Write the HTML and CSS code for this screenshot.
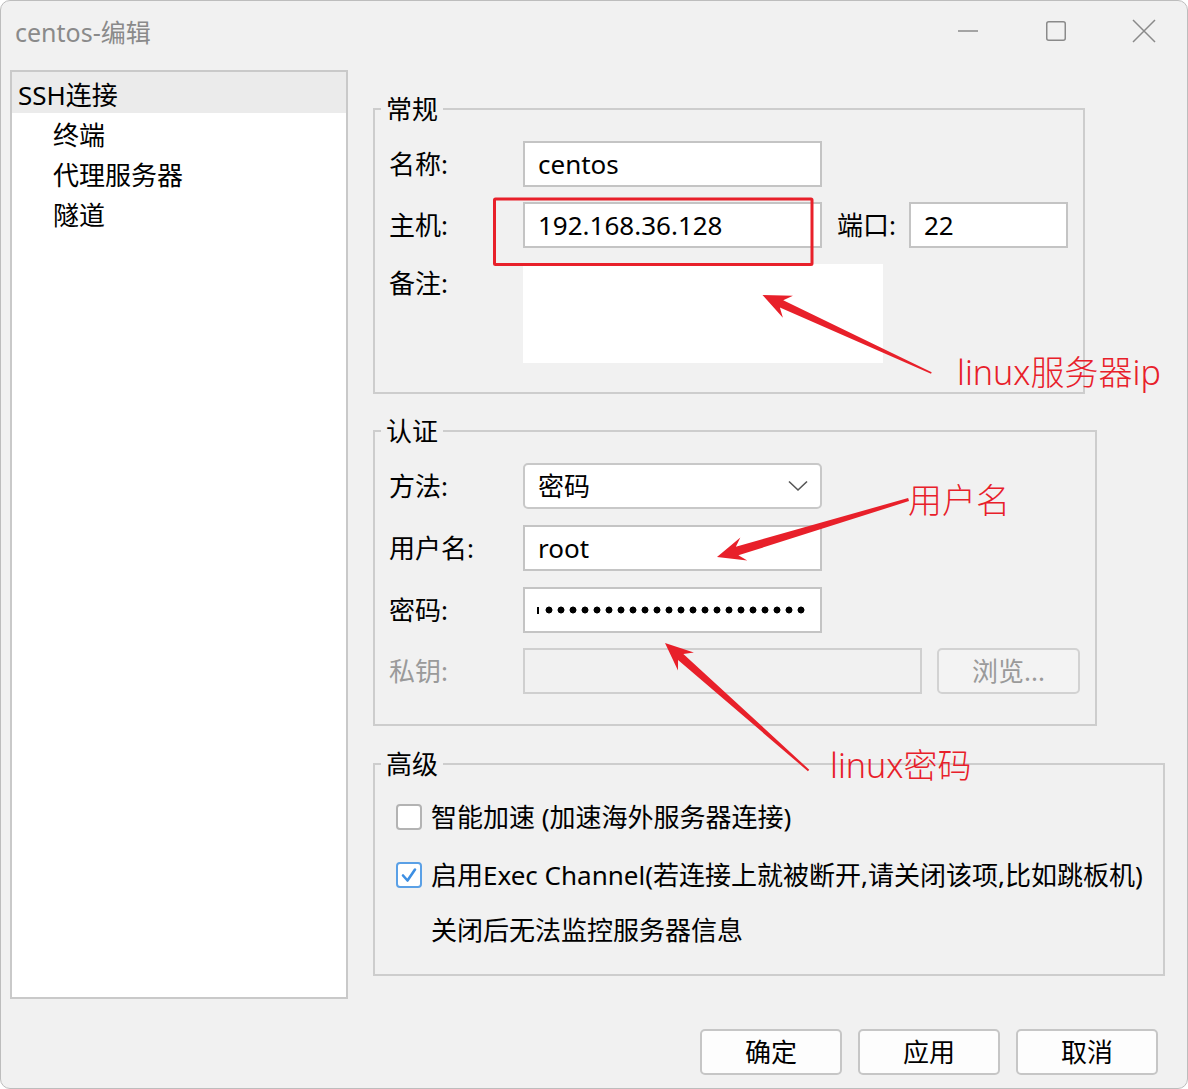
FILE: index.html
```html
<!DOCTYPE html>
<html lang="zh-CN">
<head>
<meta charset="utf-8">
<title>centos-编辑</title>
<link rel="stylesheet" href="styles.css">
</head>
<body>
<div class="window">
  <div class="titlebar">
    <span class="title">centos-编辑</span>
    <div class="controls">
      <span class="ctl"><svg width="24" height="24" viewBox="0 0 24 24"><line x1="2" y1="12" x2="22" y2="12" stroke="#8a8a8a" stroke-width="1.5"/></svg></span>
      <span class="ctl"><svg width="24" height="24" viewBox="0 0 24 24"><rect x="2.75" y="2.75" width="18.5" height="18.5" rx="2" fill="none" stroke="#8a8a8a" stroke-width="1.5"/></svg></span>
      <span class="ctl"><svg width="24" height="24" viewBox="0 0 24 24"><path d="M1 1 L23 23 M23 1 L1 23" stroke="#8a8a8a" stroke-width="1.5" fill="none"/></svg></span>
    </div>
  </div>

  <div class="main">
    <div class="tree">
      <div class="node selected">SSH连接</div>
      <div class="children">
        <div class="node child">终端</div>
        <div class="node child">代理服务器</div>
        <div class="node child">隧道</div>
      </div>
    </div>

    <div class="form">
      <fieldset class="group general">
        <legend>常规</legend>
        <div class="body">
          <div class="row">
            <span class="label">名称:</span>
            <div class="field w-main">centos</div>
          </div>
          <div class="row gap15">
            <span class="label">主机:</span>
            <div class="field w-main">192.168.36.128</div>
            <span class="label port-label">端口:</span>
            <div class="field w-port">22</div>
          </div>
          <div class="row top gap16">
            <span class="label note-label">备注:</span>
            <div class="memo"></div>
          </div>
        </div>
      </fieldset>

      <fieldset class="group auth">
        <legend>认证</legend>
        <div class="body">
          <div class="row">
            <span class="label">方法:</span>
            <div class="field w-main select">密码
              <svg class="chev" width="20" height="12" viewBox="0 0 20 12"><polyline points="1,1.5 10,10 19,1.5" fill="none" stroke="#555" stroke-width="1.6"/></svg>
            </div>
          </div>
          <div class="row gap16">
            <span class="label">用户名:</span>
            <div class="field w-main">root</div>
          </div>
          <div class="row gap16">
            <span class="label">密码:</span>
            <div class="field w-main pwd"><span class="caret"></span><span class="dots"></span></div>
          </div>
          <div class="row gap15">
            <span class="label disabled">私钥:</span>
            <div class="field w-key off"></div>
            <div class="browse">浏览...</div>
          </div>
        </div>
      </fieldset>

      <fieldset class="group adv">
        <legend>高级</legend>
        <div class="body">
          <div class="row">
            <span class="check"></span>
            <span class="ctext">智能加速 (加速海外服务器连接)</span>
          </div>
          <div class="row gap12">
            <span class="check on"><svg width="22" height="22" viewBox="0 0 22 22"><polyline points="5,11.5 9.5,16.5 17,5.5" fill="none" stroke="#3d8fe3" stroke-width="2.6" stroke-linecap="round" stroke-linejoin="round"/></svg></span>
            <span class="ctext">启用Exec Channel(若连接上就被断开,请关闭该项,比如跳板机)</span>
          </div>
          <div class="row gap9">
            <span class="ctext hint">关闭后无法监控服务器信息</span>
          </div>
        </div>
      </fieldset>
    </div>
  </div>

  <div class="footer">
    <button class="btn">确定</button>
    <button class="btn">应用</button>
    <button class="btn">取消</button>
  </div>

  <svg class="marks" width="1188" height="1089" viewBox="0 0 1188 1089">
    <rect x="494.5" y="199" width="317.5" height="65.5" rx="1" fill="none" stroke="#e8202a" stroke-width="3"/>
    <g fill="#e8202a">
      <path transform="translate(762.5,295) rotate(204.8)" d="M0,0 L-28,-12 L-21,-4 L-186,-0.8 L-186,0.8 L-21,4 L-28,12 Z"/>
      <path transform="translate(717,557) rotate(163.3)" d="M0,0 L-28,-12 L-21,-4.5 L-200,-1.6 L-200,1.6 L-21,4.5 L-28,12 Z"/>
      <path transform="translate(665,643) rotate(-138.4)" d="M0,0 L-28,-12 L-21,-4 L-192,-1 L-192,1 L-21,4 L-28,12 Z"/>
    </g>
  </svg>
  <span class="note n-ip">linux服务器ip</span>
  <span class="note n-user">用户名</span>
  <span class="note n-pwd">linux密码</span>
</div>
</body>
</html>
```

FILE: styles.css
```css
* { box-sizing: border-box; }
html, body { margin: 0; padding: 0; }
body {
  background: #ffffff;
  font-family: "Noto Sans", "Noto Sans CJK SC", sans-serif;
  font-size: 26px;
  color: #000;
}
.window {
  position: relative;
  width: 1188px;
  height: 1089px;
  background: #f1f1f1;
  border: 1px solid #bdbdbd;
  border-radius: 10px;
  overflow: hidden;
}
.titlebar {
  display: flex;
  align-items: flex-start;
  height: 69px;
}
.title {
  margin-left: 14px;
  margin-top: 16px;
  line-height: 30px;
  font-size: 25px;
  color: #8a8a8a;
}
.controls {
  margin-left: auto;
  display: flex;
  margin-right: -1px;
}
.ctl {
  width: 88px;
  height: 60px;
  display: flex;
  align-items: center;
  justify-content: center;
}

.main {
  display: flex;
  align-items: flex-start;
}
.tree {
  margin-left: 9px;
  width: 338px;
  height: 929px;
  background: #fff;
  border: 2px solid #c9c9c9;
}
.node {
  line-height: 40px;
  height: 40px;
  padding-left: 6px;
  white-space: nowrap;
}
.node.selected {
  background: #ebebeb;
  height: 41px;
  line-height: 36px;
  padding-top: 5px;
}
.children { padding-top: 2px; }
.node.child { padding-left: 41px; }

.form {
  margin-left: 25px;
  padding-top: 24px;
  display: flex;
  flex-direction: column;
}
.group {
  margin: 0;
  padding: 0;
  border: 2px solid #cdcdcd;
  min-width: 0;
}
.group legend {
  margin-left: 6px;
  padding: 0 5px;
  line-height: 30px;
  font-size: 26px;
}
.general { width: 712px; }
.auth { width: 724px; margin-top: 22px; }
.adv { width: 792px; margin-top: 23px; }

.general .body { padding: 17px 0 29px 14px; }
.auth .body { padding: 17px 0 30px 14px; }
.adv .body { padding: 15px 0 21px 21px; }

.row {
  display: flex;
  align-items: center;
  height: 46px;
}
.row.top { align-items: flex-start; height: auto; }
.gap9 { margin-top: 9px; }
.gap12 { margin-top: 12px; }
.gap15 { margin-top: 15px; }
.gap16 { margin-top: 16px; }

.label {
  width: 134px;
  flex: none;
  line-height: 30px;
  white-space: nowrap;
}
.label.disabled { color: #9a9a9a; }
.note-label { line-height: 38px; }
.port-label { width: 72px; margin-left: 15px; }

.field {
  height: 46px;
  background: #fff;
  border: 2px solid #c4c4c4;
  padding-left: 13px;
  line-height: 42px;
  white-space: nowrap;
  flex: none;
}
.w-main { width: 299px; }
.w-port { width: 159px; }
.w-key { width: 399px; }
.field.off { background: #f1f1f1; border-color: #cfcfcf; }
.select {
  border-radius: 5px;
  border-color: #c8c8c8;
  display: flex;
  align-items: center;
}
.chev { margin-left: auto; margin-right: 12px; }
.memo {
  width: 360px;
  height: 99px;
  background: #fff;
}
.pwd { display: flex; align-items: center; padding-left: 12px; }
.caret {
  width: 2px;
  height: 7px;
  background: #000;
  margin-right: 6px;
}
.dots {
  width: 264px;
  height: 8px;
  background: radial-gradient(circle at 4px 4px, #000 3.1px, transparent 3.8px) 0 0 / 12px 8px repeat-x;
}
.browse {
  margin-left: 15px;
  width: 143px;
  height: 46px;
  border: 2px solid #d2d2d2;
  border-radius: 5px;
  background: #f3f3f3;
  color: #9a9a9a;
  text-align: center;
  line-height: 42px;
}

.check {
  width: 26px;
  height: 26px;
  flex: none;
  border: 2px solid #b3b3b3;
  border-radius: 4px;
  background: #fff;
  margin-right: 9px;
  display: flex;
  align-items: center;
  justify-content: center;
}
.check.on { border-color: #5aa0e6; }
.ctext { line-height: 30px; white-space: nowrap; }
.hint { margin-left: 35px; }

.footer {
  display: flex;
  justify-content: flex-end;
  gap: 16px;
  padding-top: 30px;
  padding-right: 29px;
}
.btn {
  width: 142px;
  height: 46px;
  border: 2px solid #c6c6c6;
  border-radius: 5px;
  background: #fdfdfd;
  font-family: inherit;
  font-size: 26px;
  color: #000;
  line-height: 40px;
  padding: 0;
}

.marks {
  position: absolute;
  left: -1px;
  top: -1px;
  pointer-events: none;
}
.note {
  position: absolute;
  color: #e8202a;
  font-size: 34px;
  font-weight: 300;
  line-height: 40px;
  white-space: nowrap;
}
.n-ip { left: 956px; top: 351px; }
.n-user { left: 907px; top: 479px; font-size: 34px; }
.n-pwd { left: 829px; top: 744px; }
```
